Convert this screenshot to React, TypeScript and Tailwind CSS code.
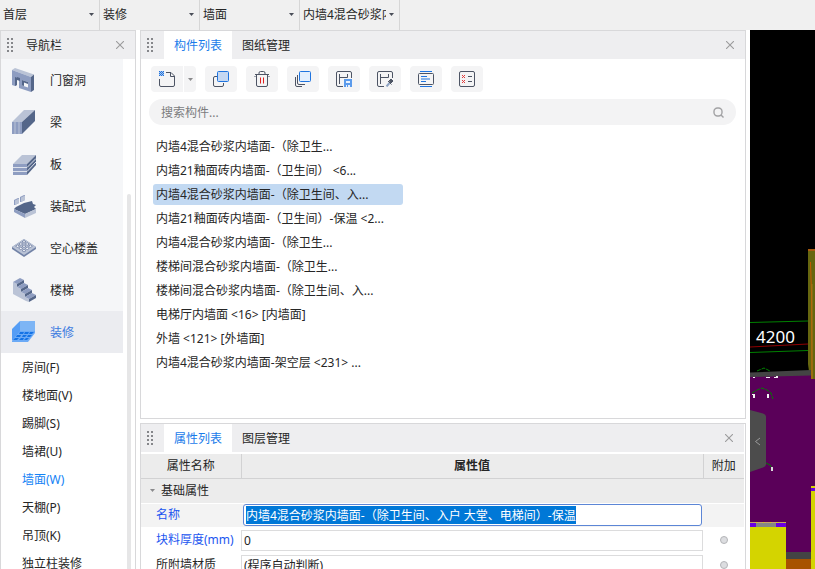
import React, { useEffect, useRef, useState } from 'react';

const filters = [
  { label: '楼层', value: '首层' },
  { label: '构件类别', value: '装修' },
  { label: '构件类型', value: '墙面' },
  { label: '构件', value: '内墙4混合砂浆内墙面-（除卫生间、入户 大堂、电梯间）-保温' },
];

const finishes = ['房间(F)', '楼地面(V)', '踢脚(S)', '墙裙(U)', '墙面(W)', '天棚(P)', '吊顶(K)', '独立柱装修'];

const components = [
  '内墙4混合砂浆内墙面-（除卫生...',
  '内墙21釉面砖内墙面-（卫生间） <6...',
  '内墙4混合砂浆内墙面-（除卫生间、入...',
  '内墙21釉面砖内墙面-（卫生间）-保温 <2...',
  '内墙4混合砂浆内墙面-（除卫生...',
  '楼梯间混合砂浆内墙面-（除卫生...',
  '楼梯间混合砂浆内墙面-（除卫生间、入...',
  '电梯厅内墙面 <16> [内墙面]',
  '外墙 <121> [外墙面]',
  '内墙4混合砂浆内墙面-架空层 <231> ...',
];

/* ---------- small shared pieces ---------- */

const Grip = () => (
  <svg className="h-4 w-2 shrink-0" viewBox="0 0 8 16" fill="#85868a">
    {[1, 5, 9, 13].map((y) => (
      <React.Fragment key={y}>
        <rect x="1" y={y} width="2" height="2" />
        <rect x="5" y={y} width="2" height="2" />
      </React.Fragment>
    ))}
  </svg>
);

const CloseButton = () => (
  <button type="button" aria-label="关闭" className="flex h-4 w-4 items-center justify-center">
    <svg className="h-2 w-2" viewBox="0 0 8 8" stroke="#9b9b9d" strokeWidth="1.1">
      <path d="M0 0l8 8M8 0L0 8" />
    </svg>
  </button>
);

const Caret = ({ className = '' }: { className?: string }) => (
  <svg className={`h-[3px] w-[5px] ${className}`} viewBox="0 0 5 3" fill="currentColor">
    <path d="M0 0h5L2.5 3z" />
  </svg>
);

/* ---------- navigation icons ---------- */

const light = '#bac3d6';
const mid = '#8e9dc1';
const dark = '#546689';

const DoorIcon = () => (
  <>
    <path d="M0 2l3-2 19 6.5-3 2.5z" fill={light} />
    <path fillRule="evenodd" d="M0 2l19 7v15L7 20v-9.500L5 10v7l-2 1-3-1zM10 12v5.500l6 2V14z" fill={mid} />
    <path d="M19 9l3-2.500V22l-3 2z" fill={dark} />
    <path d="M3 9l2 .8V17l-2 1zM5 9l3 1v3l-3-1zM10 12l6 2v2l-4-1.500V18l-2-.5z" fill={dark} />
  </>
);

const BeamIcon = () => (
  <>
    <path d="M0 12L12 0h11L10 12z" fill={light} />
    <path d="M0 12h10v12H0z" fill={mid} />
    <path d="M10 12L23 0v11L10 24z" fill={dark} />
    <path d="M3 12v12M7 12v12" stroke={light} strokeWidth="1" />
  </>
);

const SlabIcon = () => (
  <>
    <path d="M1 12l9-9h14l-9 9z" fill={light} />
    <path d="M15 12l9-9v10l-9 10z" fill={dark} />
    <path d="M1 12h14v11H1z" fill={mid} />
    <path d="M1 15.500h14l9-9M1 19.500h14l9-9.500" fill="none" stroke="#dde2ec" strokeWidth="1" />
  </>
);

const PrefabIcon = () => (
  <>
    <path d="M2 15l2-2 8-4 8-2 1 3 3 1-2 2 2 2-11 5z" fill={dark} />
    <path d="M2 15l11 5v4L2 18z" fill={mid} />
    <path d="M13 20l11-5v4l-11 5z" fill={light} />
    <path d="M2 6l4-2h1v5l-4 2H2zM8 3l4-2h1v5L9 8H8z" fill={mid} />
    <path d="M3 6.500l4-2V9l-4 2zM9 3.500l4-2V6L9 8z" fill={light} />
  </>
);

const HollowIcon = () => (
  <>
    <path d="M0 11l12-8 12 8v2l-12 8-12-8z" fill="#7282a6" />
    <path d="M0 11l12-8 12 8-12 8z" fill={light} />
    <path
      d="M12 4.500l2 1.300-2 1.300-2-1.300zM8.800 6.700l2 1.300-2 1.300-2-1.300zM5.600 8.900l2 1.300-2 1.300-2-1.300zM15.200 6.700l2 1.300-2 1.300-2-1.300zM12 8.900l2 1.300-2 1.300-2-1.300zM8.800 11.100l2 1.300-2 1.300-2-1.300zM18.400 8.900l2 1.300-2 1.300-2-1.300zM15.200 11.100l2 1.300-2 1.300-2-1.300zM12 13.300l2 1.300-2 1.300-2-1.300z"
      fill="#f4f6fa"
      stroke="#65769b"
      strokeWidth=".7"
    />
  </>
);

const StairsIcon = () => (
  <>
    <path d="M1 4l4 2v3l4 2v3l4 2v3l4 2v3l-3-1L1 16z" fill={light} />
    {[0, 1, 2, 3].map((i) => (
      <g key={i} transform={`translate(${i * 4} ${i * 5})`}>
        <path d="M1 4l7-4 4 2-7 4z" fill={mid} />
        <path d="M5 6l7-4v3L5 9z" fill={dark} />
      </g>
    ))}
  </>
);

const FinishIcon = () => (
  <>
    <path d="M8 1h15v11H8z" fill="#7db5f5" />
    <path d="M0 9l8-8v11l-8 9z" fill="#559df5" />
    <path d="M0 21l8-10h15v2l-7 9H0z" fill="#6baaf6" />
    <path
      d="M8 12h4l-1 2H7zM13 12h4l-1 2h-4zM18 12h4l-2 2h-3zM5 15h4l-1 2H4zM11 15h4l-2 2h-3zM16 15h4l-2 2h-3zM3 18h4l-2 2H1zM9 18h3l-1 2H7zM14 18h3l-2 2h-3z"
      fill="#1473e6"
    />
  </>
);

const categories = [
  { name: '门窗洞', icon: <DoorIcon /> },
  { name: '梁', icon: <BeamIcon /> },
  { name: '板', icon: <SlabIcon /> },
  { name: '装配式', icon: <PrefabIcon /> },
  { name: '空心楼盖', icon: <HollowIcon /> },
  { name: '楼梯', icon: <StairsIcon /> },
  { name: '装修', icon: <FinishIcon /> },
];

/* ---------- toolbar icons ---------- */

const ink = '#4d5464';
const blue = '#1f74df';

const NewIcon = () => (
  <>
    <path d="M7 1.500h5l3.500 3.500v9q0 1.500-1.500 1.500H2Q.5 15.500.5 14V8M11.500 1.500v4h4" stroke={ink} />
    <path
      shapeRendering="crispEdges"
      d="M0 0h1v1H0zM2 0h1v1H2zM4 0h1v1H4zM1 1h1v1H1zM3 1h1v1H3zM0 2h1v1H0zM2 2h1v1H2zM4 2h1v1H4zM1 3h1v1H1zM3 3h1v1H3zM0 4h1v1H0zM2 4h1v1H2zM4 4h1v1H4z"
      fill={blue}
    />
    <path d="M0 0h5v5H0z" fill={blue} fillOpacity=".35" />
  </>
);

const CopyIcon = () => (
  <>
    <path d="M4 5.500H2Q.5 5.500.5 7v7q0 1.500 1.500 1.500h7q1.500 0 1.500-1.500v-2" stroke={ink} />
    <rect x="4.500" y=".5" width="11" height="10" rx="1" stroke={blue} fill="#c5d8f2" />
  </>
);

const TrashIcon = () => (
  <>
    <path d="M1 3.500h14M5 3V2Q5 .5 6.500.5h3Q11 .5 11 2v1M.5 5.500h1M14.500 5.500h1M2.500 4v10q0 1.500 1.500 1.500h8q1.500 0 1.500-1.500V4" stroke={ink} />
    <path d="M6.500 6.500v6M9.500 6.500v6" stroke="#e02020" />
  </>
);

const LayersIcon = () => (
  <>
    <path d="M.5 6v8q0 1.500 1.500 1.500h5M2.500 4v8q0 1.500 1.500 1.500h6" stroke={ink} />
    <rect x="4.500" y=".5" width="11" height="10" rx="1" stroke={blue} fill="#e3effd" />
  </>
);

const SaveIcon = () => (
  <>
    <path d="M7 15.500H2Q.5 15.500.5 14V2Q.5.5 2 .5h12q1.500 0 1.500 1.500v5M3.500 3v10M3.500 6.500h8M11.500 3v3.500" stroke={ink} />
    <path d="M8 8h8v8H8z" fill="#5b9bec" />
    <path d="M10 10h4v2h-4zM10 14h1v2h-1zM12 14h2v2h-2z" fill="#e8f1fd" />
  </>
);

const PickIcon = () => (
  <>
    <path d="M7 15.500H2Q.5 15.500.5 14V2Q.5.5 2 .5h12q1.500 0 1.500 1.500v5M3.500 3v10M3.500 6.500h8M11.500 3v3.500" stroke={ink} />
    <path d="M9.500 15.500l3-3.500" stroke="#8fa4c4" strokeWidth="2" />
    <path d="M12 10l2-2 2 2-2.500 2.500M11 10l3.500 3.500" stroke={ink} fill={ink} />
  </>
);

const TextIcon = () => (
  <>
    <path d="M2 .5h12M2 15.500h12" stroke={blue} />
    <rect x=".5" y="2.500" width="15" height="11" rx="1" stroke={ink} />
    <path d="M3 5.500h6M3 8h9M3 10.500h5" stroke={blue} />
  </>
);

const CheckListIcon = () => (
  <>
    <rect x=".5" y=".5" width="15" height="15" rx="1.500" stroke={ink} />
    <path d="M3 4l3 3M6 4L3 7M3 9l3 3M6 9l-3 3" stroke="#e23b3b" />
    <path d="M9 5.500h4M9 10.500h4" stroke={ink} />
  </>
);

const tools = [
  { name: '复制', icon: <CopyIcon /> },
  { name: '删除', icon: <TrashIcon /> },
  { name: '层间复制', icon: <LayersIcon /> },
  { name: '存档', icon: <SaveIcon /> },
  { name: '提取', icon: <PickIcon /> },
  { name: '文字', icon: <TextIcon /> },
  { name: '检查', icon: <CheckListIcon /> },
];

const ToolGlyph = ({ children }: { children: React.ReactNode }) => (
  <svg className="h-4 w-4" viewBox="0 0 16 16" fill="none" strokeWidth="1">
    {children}
  </svg>
);

/* ---------- panels ---------- */

const TabHeader = ({ tabs }: { tabs: string[] }) => (
  <div className="flex h-7 shrink-0 items-center bg-[#eeeef0] pr-[7px] pl-[5px]">
    <Grip />
    <div role="tablist" className="ml-2.5 flex h-full flex-1">
      {tabs.map((tab, i) => (
        <button
          key={tab}
          type="button"
          role="tab"
          aria-selected={i === 0}
          className={`px-2.5 pt-0.5 ${i === 0 ? 'bg-white text-[#1a7bea]' : ''}`}
        >
          {tab}
        </button>
      ))}
    </div>
    <CloseButton />
  </div>
);

const Navigator = () => (
  <aside className="flex w-[136px] shrink-0 flex-col border border-b-0 border-[#d8d8da] bg-white">
    <div className="flex h-7 shrink-0 items-center bg-[#eeeef0] pr-[7px] pl-[5px]">
      <Grip />
      <h2 className="ml-3 flex-1 pt-0.5">导航栏</h2>
      <CloseButton />
    </div>
    <div className="flex min-h-0 flex-1 overflow-hidden">
      <nav className="flex-1">
        <ul className="bg-[#f5f6f8]">
          {categories.map(({ name, icon }) => (
            <li key={name}>
              <button
                type="button"
                className={`flex h-[42px] w-full items-center gap-3.5 pl-[11px] ${
                  name === '装修' ? 'bg-[#ebecf0] text-[#3c7be0]' : ''
                }`}
              >
                <svg className="h-6 w-6" viewBox="0 0 24 24">
                  {icon}
                </svg>
                <span className="pt-0.5">{name}</span>
              </button>
            </li>
          ))}
        </ul>
        <ul>
          {finishes.map((name) => (
            <li key={name}>
              <button
                type="button"
                className={`flex h-7 w-full items-center pt-0.5 pl-[21px] ${name === '墙面(W)' ? 'text-[#1382f5]' : ''}`}
              >
                {name}
              </button>
            </li>
          ))}
        </ul>
      </nav>
      <div className="flex w-3 flex-col items-center pt-[135px]">
        <div className="w-1 flex-1 rounded-t bg-[#e6e6e7]" />
      </div>
    </div>
  </aside>
);

const ComponentList = () => (
  <section className="flex min-h-0 flex-1 flex-col border border-[#d8d8da] bg-white">
    <TabHeader tabs={['构件列表', '图纸管理']} />
    <div className="flex gap-[9px] px-2.5 pt-[7px]">
      <div className="flex gap-px">
        <button type="button" aria-label="新建" className="flex h-[26px] w-8 items-center justify-center rounded-l bg-[#f4f4f5]">
          <ToolGlyph>
            <NewIcon />
          </ToolGlyph>
        </button>
        <button type="button" aria-label="新建选项" className="flex h-[26px] w-3 items-center justify-center rounded-r bg-[#f4f4f5]">
          <Caret className="text-[#8a8a8c]" />
        </button>
      </div>
      {tools.map(({ name, icon }) => (
        <button key={name} type="button" aria-label={name} className="flex h-[26px] w-8 items-center justify-center rounded bg-[#f4f4f5]">
          <ToolGlyph>{icon}</ToolGlyph>
        </button>
      ))}
    </div>
    <label className="mt-[7px] mr-[9px] ml-2 flex h-[26px] shrink-0 items-center rounded-full bg-[#f3f3f4] px-3">
      <input
        type="text"
        aria-label="搜索构件"
        placeholder="搜索构件..."
        className="min-w-0 flex-1 bg-transparent pt-0.5 outline-none placeholder:text-[#7c7c7e]"
      />
      <svg className="h-[11px] w-[11px]" viewBox="0 0 11 11" fill="none" stroke="#a2a2a4" strokeWidth="1.4">
        <rect x="1" y="1" width="8" height="8" rx="3.500" />
        <path d="M8 8l2.500 2.500" />
      </svg>
    </label>
    <ul className="mt-[11px] flex flex-col gap-[3px] px-3">
      {components.map((name, i) => (
        <li key={i}>
          <button
            type="button"
            className={`flex h-[21px] w-[250px] items-center rounded-[3px] pl-[3px] whitespace-nowrap ${i === 2 ? 'bg-[#c2d9f2]' : ''}`}
          >
            {name}
          </button>
        </li>
      ))}
    </ul>
  </section>
);

const PropertyList = () => {
  const [title, setTitle] = useState('内墙4混合砂浆内墙面-（除卫生间、入户 大堂、电梯间）-保温');
  const nameRef = useRef<HTMLInputElement>(null);

  // the name opens ready to be overtyped
  useEffect(() => {
    nameRef.current?.focus();
    nameRef.current?.select();
  }, []);

  return (
    <section className="h-[146px] shrink-0 overflow-hidden border border-b-0 border-[#d8d8da] bg-white pr-px">
      <TabHeader tabs={['属性列表', '图层管理']} />
      <table className="mt-0.5 w-full table-fixed">
        <colgroup>
          <col className="w-[100px]" />
          <col />
          <col className="w-[41px]" />
        </colgroup>
        <thead>
          <tr className="h-6 border-b border-[#d2d2d3] bg-[#ececec]">
            <th className="border-r border-[#d2d2d3] font-normal">属性名称</th>
            <th className="border-r border-[#d2d2d3] font-bold">属性值</th>
            <th className="font-normal">附加</th>
          </tr>
        </thead>
        <tbody>
          <tr className="h-[25px] border-b border-white bg-[#ececec]">
            <th colSpan={3} className="text-left font-normal">
              <button type="button" className="flex items-center gap-1.5 pl-[9px]">
                <Caret className="text-[#8a8a8c]" />
                基础属性
              </button>
            </th>
          </tr>
          <tr className="h-6 bg-[#f3f3f3]">
            <td className="pl-[15px] text-[#1c56f0]">
              <label htmlFor="prop-name">名称</label>
            </td>
            <td className="pr-px pl-0.5">
              <input
                id="prop-name"
                ref={nameRef}
                type="text"
                value={title}
                onChange={(e) => setTitle(e.target.value)}
                className="block h-[22px] w-full rounded-[3px] border border-[#5c86d6] bg-white px-0.5 outline-none selection:bg-[#0078d7] selection:text-white"
              />
            </td>
            <td />
          </tr>
          <tr className="h-[26px]">
            <td className="pl-[15px] text-[#1c56f0]">
              <label htmlFor="prop-thickness">块料厚度(mm)</label>
            </td>
            <td>
              <input id="prop-thickness" type="text" defaultValue="0" className="block h-[21px] w-full border border-[#dcdcdd] bg-white px-0.5 outline-none" />
            </td>
            <td>
              <input type="checkbox" aria-label="附加块料厚度" className="mx-auto block h-2 w-2 appearance-none rounded-full border border-[#b4b5b8] bg-[#dcdde0]" />
            </td>
          </tr>
          <tr className="h-6">
            <td className="pl-[15px]">
              <label htmlFor="prop-material">所附墙材质</label>
            </td>
            <td>
              <input id="prop-material" type="text" defaultValue="(程序自动判断)" className="block h-[21px] w-full border border-[#dcdcdd] bg-white px-0.5 outline-none" />
            </td>
            <td>
              <input type="checkbox" aria-label="附加所附墙材质" className="mx-auto block h-2 w-2 appearance-none rounded-full border border-[#b4b5b8] bg-[#dcdde0]" />
            </td>
          </tr>
        </tbody>
      </table>
    </section>
  );
};

const ModelView = () => (
  <main className="relative ml-1 w-[65px] shrink-0 overflow-hidden bg-black">
    <svg className="block h-[539px] w-[65px]" viewBox="0 0 65 539">
      {/* wall column */}
      <path d="M58 220h7v129h-5l-2-15z" fill="#66660f" />
      <path d="M58 220h7" stroke="#a85a10" strokeWidth="2" />
      <path d="M60.500 232l1 32 .5 85" fill="none" stroke="#c85a00" />
      <path d="M62 254v95" stroke="#a07818" />
      {/* floor */}
      <path d="M0 346l61-3v196H0z" fill="#5a0059" />
      <path d="M61 349h4v190h-4z" fill="#5a0059" />
      <path d="M0 342.500l61-2.500v5.500L0 347z" fill="#444" />
      {/* dimension lines */}
      <path d="M0 292.500l58-1.500M0 322.500l58-2" stroke="#008000" />
      <path d="M0 317l58-3" stroke="#900000" />
      <text x="6" y="313" fill="#fff" fontSize="17" fontFamily="'Noto Sans', sans-serif">
        4200
      </text>
      <path d="M7 341l7-3 6 3M2 363l5-3 5-2 5 2 4 3 2 6" fill="none" stroke="#008000" strokeDasharray="4 1" />
      <path d="M3 347h2v1H3zM16 347h4v1h-4zM24 347h4v1h-4zM26 346h2v2h-2zM2 364h3v1H2zM3 364h2v4H3zM17 364h2v4h-2z" fill="#f4f4f4" />
      <path d="M16 433l4 2 2 3" fill="none" stroke="#008000" />
      <path d="M21 437h2v4h-2z" fill="#dcdcdc" />
      {/* near walls */}
      <path d="M36 522h25v8H36z" fill="#444" />
      <path d="M36 529h25v10H36z" fill="#a85200" />
      <path d="M0 492h36v47H0z" fill="#d4d400" />
      <path d="M0 493h36v4H0z" fill="#6a00e0" />
      <path d="M6 493h20v4H6z" fill="#858585" />
      <path d="M0 492.500h36" stroke="#c9a06a" strokeDasharray="6 1" />
      <path d="M61 456h4v83h-4z" fill="#d4d400" />
      <path d="M61 458h4v3h-4z" fill="#6a00e0" />
    </svg>
    <button type="button" aria-label="收起" className="absolute top-[380px] left-0 h-[62px] w-4">
      <svg className="h-[62px] w-4" viewBox="0 0 16 62">
        <path d="M0 0l13 3.500q3 1 3 3v48q0 2-3 3L0 62z" fill="#4c4c4c" />
        <path d="M10 28l-4.500 3.500L10 35" fill="none" stroke="#9a9a9a" />
      </svg>
    </button>
  </main>
);

export default function App() {
  return (
    <div className="flex h-screen flex-col overflow-hidden bg-white font-['Noto_Sans','Noto_Sans_CJK_SC',sans-serif] text-xs leading-4 text-[#262626]">
      <header className="flex h-[30px] shrink-0 bg-[#f0f0f0]">
        {filters.map(({ label, value }) => (
          <div key={label} className="relative w-[100px] border-r border-[#d6d6d6]">
            <select aria-label={label} className="h-full w-full appearance-none bg-transparent pr-[13px] pl-[3px] outline-none">
              <option>{value}</option>
            </select>
            <Caret className="pointer-events-none absolute top-[13px] right-[5px] text-[#4a4e58]" />
          </div>
        ))}
      </header>
      <div className="flex min-h-0 flex-1">
        <Navigator />
        <div className="ml-1 flex min-w-0 flex-1 flex-col gap-1">
          <ComponentList />
          <PropertyList />
        </div>
        <ModelView />
      </div>
    </div>
  );
}
